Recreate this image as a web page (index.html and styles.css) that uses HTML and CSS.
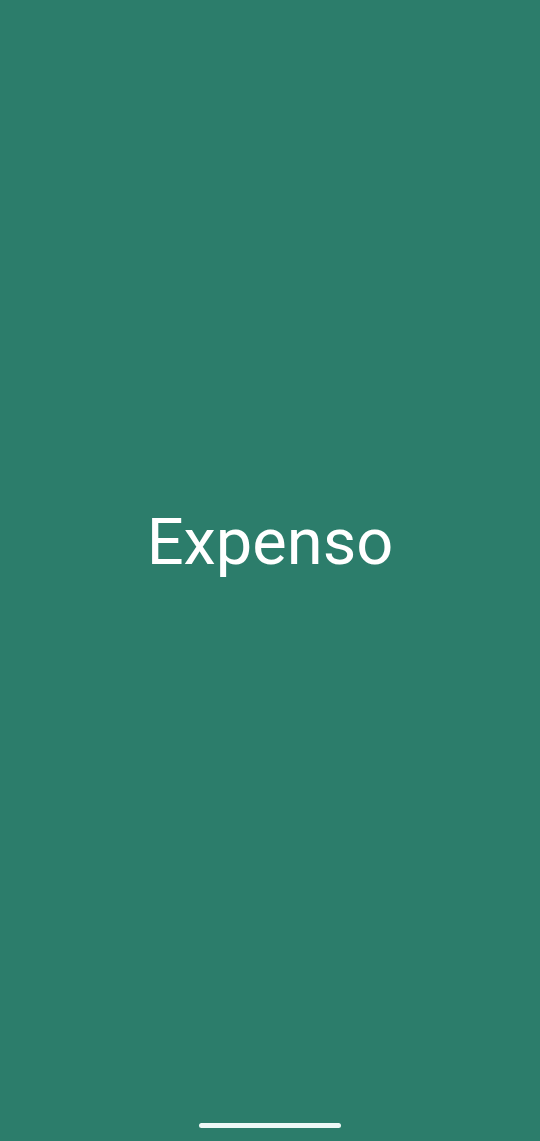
FILE: index.html
```html
<!DOCTYPE html>
<html lang="en">
<head>
<meta charset="utf-8">
<meta name="viewport" content="width=device-width, initial-scale=1">
<title>Expenso</title>
<link rel="stylesheet" href="styles.css">
</head>
<body>
<div class="screen">
  <main class="content">
    <h1 class="brand">Expenso</h1>
  </main>
  <div class="navbar">
    <div class="home-indicator"></div>
  </div>
</div>
</body>
</html>
```

FILE: styles.css
```css
html, body {
  margin: 0;
  padding: 0;
  height: 100%;
}
body {
  background: #2c7d6b;
  font-family: Roboto, "Noto Sans", sans-serif;
}
.screen {
  height: 100vh;
  display: flex;
  flex-direction: column;
}
.content {
  flex: 1;
  display: flex;
  align-items: center;
  justify-content: center;
}
.brand {
  margin: 0;
  font-size: 65px;
  font-weight: 400;
  color: #ffffff;
  line-height: normal;
  letter-spacing: 0;
}
.navbar {
  height: 58px;
  display: flex;
  align-items: flex-end;
  justify-content: center;
  padding-bottom: 13px;
  box-sizing: border-box;
}
.home-indicator {
  width: 142px;
  height: 5px;
  border-radius: 3px;
  background: #eef8f6;
}
```
